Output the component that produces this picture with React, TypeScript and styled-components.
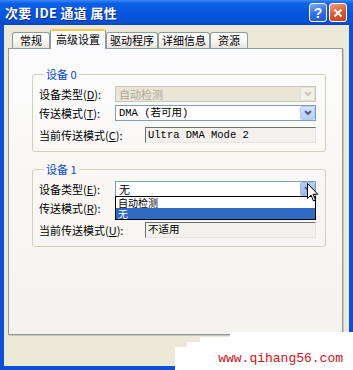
import styled, { createGlobalStyle, css } from 'styled-components'

const GlobalStyle = createGlobalStyle`
  html, body {
    margin: 0;
    padding: 0;
    background: #fff;
  }
  body {
    font-family: "Noto Sans CJK SC", "DejaVu Sans", sans-serif;
  }
`

const TABS = ['常规', '高级设置', '驱动程序', '详细信息', '资源']
const ACTIVE_TAB = 1

const Window = styled.div`
  position: relative;
  width: 353px;
  height: 370px;
  display: flex;
  flex-direction: column;
  overflow: hidden;
  font-size: 11px;
  color: #000;
`

const TitleBar = styled.div`
  flex: none;
  height: 25px;
  display: flex;
  align-items: center;
  padding: 0 6px 0 5px;
  background: linear-gradient(
    180deg,
    #3b86f5 0%,
    #0b60e8 14%,
    #0757dd 50%,
    #0652d6 86%,
    #0a46bd 100%
  );
`

const Title = styled.div`
  flex: 1;
  color: #fff;
  font-weight: bold;
  font-size: 13px;
  letter-spacing: 0.3px;
  text-shadow: 1px 1px 0 #0b2b8c;
  white-space: pre;
`

const CaptionButton = styled.div<{ $kind: 'help' | 'close' }>`
  box-sizing: border-box;
  width: 18px;
  height: 19px;
  margin-left: 2px;
  border: 1px solid #fff;
  border-radius: 3px;
  display: flex;
  align-items: center;
  justify-content: center;
  color: #fff;
  font-family: "Liberation Sans", sans-serif;
  font-weight: bold;
  font-size: 14px;
  ${(p) =>
    p.$kind === 'help'
      ? css`
          background: linear-gradient(160deg, #7eaaf8 0%, #2f6ce6 55%, #2459d4 100%);
        `
      : css`
          background: linear-gradient(160deg, #f0a07e 0%, #d9562a 55%, #c7441b 100%);
        `}
`

const Frame = styled.div`
  flex: 1;
  display: flex;
  flex-direction: column;
  background: #ece9d8;
  border: 4px solid #0d4fd6;
  border-top: none;
  padding: 4px 6px 0 4px;
`

const TabStrip = styled.div`
  display: flex;
  align-items: flex-end;
  height: 19px;
  padding-left: 4px;
`

const Tab = styled.div<{ $active?: boolean }>`
  box-sizing: border-box;
  min-width: 38px;
  height: 16px;
  padding: 0 3px;
  display: flex;
  align-items: center;
  justify-content: center;
  border: 1px solid #919b9c;
  border-bottom: none;
  border-radius: 3px 3px 0 0;
  background: linear-gradient(180deg, #ffffff 0%, #f6f5f1 60%, #e6e4da 100%);
  line-height: 1;
  white-space: nowrap;
  ${(p) =>
    p.$active &&
    css`
      position: relative;
      z-index: 1;
      height: 20px;
      margin-bottom: -1px;
      padding: 0 5px 2px;
      background: #fcfcfe;
      border-top: 2px solid #f9c64a;
    `}
`

const Panel = styled.div`
  box-sizing: border-box;
  flex: none;
  height: 287px;
  border: 1px solid #919b9c;
  box-shadow: 1px 1px 0 #c9c7bb;
  background: linear-gradient(180deg, #fcfcfe 0%, #f9f8f5 40%, #f4f3ee 100%);
  padding: 19px 16px 0 23px;
`

const Group = styled.fieldset`
  margin: 0;
  padding: 5px 9px 8px 6px;
  border: 1px solid #d0d0bf;
  border-radius: 3px;
  min-inline-size: 0;
  & + & {
    margin-top: 11px;
  }
`

const Legend = styled.legend`
  margin-left: 5px;
  padding: 0 2px;
  color: #0046d5;
  font-size: 11px;
  line-height: 13px;
`

const Row = styled.div<{ $label: number; $top: number }>`
  display: grid;
  grid-template-columns: ${(p) => p.$label}px 1fr;
  align-items: center;
  height: 16px;
  margin-top: ${(p) => p.$top}px;
`

const Label = styled.span`
  white-space: nowrap;
  line-height: 1;
`

const Combo = styled.div<{ $disabled?: boolean; $open?: boolean }>`
  position: relative;
  box-sizing: border-box;
  height: 16px;
  display: flex;
  align-items: center;
  padding-left: 3px;
  border: 1px solid ${(p) => (p.$disabled ? '#c9c7ba' : '#7f9db9')};
  background: ${(p) => (p.$disabled ? '#ebe5d6' : '#fff')};
  color: ${(p) => (p.$disabled ? '#aca899' : '#000')};
  ${(p) =>
    p.$open &&
    css`
      border-bottom-color: #000;
    `}
`

const ComboText = styled.span<{ $cjk?: boolean }>`
  flex: 1;
  white-space: nowrap;
  line-height: 1;
  font-family: ${(p) =>
    p.$cjk ? '"Noto Sans CJK SC", sans-serif' : '"Liberation Mono", "Noto Sans CJK SC", monospace'};
  font-size: ${(p) => (p.$cjk ? 11 : 10.5)}px;
`

const DropButton = styled.span<{ $state: 'normal' | 'disabled' | 'hot' }>`
  flex: none;
  box-sizing: border-box;
  width: 15px;
  height: 14px;
  border-radius: 2px;
  display: flex;
  align-items: center;
  justify-content: center;
  ${(p) =>
    p.$state === 'disabled'
      ? css`
          border: 1px solid #e2e0d4;
          background: #f3f1e8;
          color: #c9c7ba;
        `
      : p.$state === 'hot'
        ? css`
            border: 1px solid #a5b9e3;
            background: linear-gradient(180deg, #b9cdf5 0%, #9db5ea 100%);
            color: #4d6185;
          `
        : css`
            border: 1px solid #b8cbf3;
            background: linear-gradient(180deg, #d5e2fd 0%, #b8cdf8 100%);
            color: #4d6185;
          `}
`

const ReadBox = styled.div`
  box-sizing: border-box;
  height: 16px;
  display: flex;
  align-items: center;
  padding-left: 2px;
  border-top: 1px solid #6f6f6f;
  border-left: 1px solid #6f6f6f;
  border-right: 1px solid #e6e4dc;
  border-bottom: 1px solid #e6e4dc;
  background: #f2f1ec;
  white-space: nowrap;
  line-height: 1;
  font-family: "Liberation Mono", "Noto Sans CJK SC", monospace;
  font-size: 10.5px;
`

const DropList = styled.div`
  position: absolute;
  z-index: 2;
  top: 100%;
  left: -1px;
  right: -1px;
  border: 1px solid #000;
  background: #fff;
`

const DropItem = styled.div<{ $selected?: boolean }>`
  display: flex;
  align-items: center;
  height: 11px;
  padding-left: 2px;
  font-size: 10px;
  line-height: 1;
  white-space: nowrap;
  ${(p) =>
    p.$selected &&
    css`
      background: #316ac5;
      color: #fff;
    `}
`

const Footer = styled.div`
  flex: 1;
`

const Watermark = styled.div`
  position: absolute;
  right: 0;
  bottom: 0;
  box-sizing: border-box;
  width: 178px;
  height: 38px;
  background: #fff;
  clip-path: polygon(
    55px 0,
    100% 0,
    100% 100%,
    0 100%,
    0 15px,
    12px 15px,
    12px 10px,
    25px 10px,
    25px 5px,
    55px 5px
  );
  display: flex;
  align-items: flex-end;
  justify-content: flex-end;
  padding: 0 10px 5px 0;
  font-family: "Liberation Mono", monospace;
  font-size: 13px;
  line-height: 1;
  color: #cc1414;
`

const Pointer = styled.svg`
  position: absolute;
  z-index: 5;
  left: 307px;
  top: 183px;
`

const Chevron = () => (
  <svg width="8" height="6" viewBox="0 0 8 6">
    <path d="M1 1 L4 4 L7 1" fill="none" stroke="currentColor" strokeWidth="2" />
  </svg>
)

const Mnemonic = ({ text, keyChar }: { text: string; keyChar: string }) => (
  <Label>
    {text}(<u>{keyChar}</u>):
  </Label>
)

const App = () => {
  return (
    <>
      <GlobalStyle />
      <Window>
        <TitleBar>
          <Title>次要 IDE 通道 属性</Title>
          <CaptionButton $kind="help">?</CaptionButton>
          <CaptionButton $kind="close">
            <svg width="10" height="10" viewBox="0 0 10 10">
              <path d="M1.5 1.5 L8.5 8.5 M8.5 1.5 L1.5 8.5" stroke="#fff" strokeWidth="2" />
            </svg>
          </CaptionButton>
        </TitleBar>
        <Frame>
          <TabStrip>
            {TABS.map((t, i) => (
              <Tab key={t} $active={i === ACTIVE_TAB}>
                {t}
              </Tab>
            ))}
          </TabStrip>
          <Panel>
            <Group>
              <Legend>设备 0</Legend>
              <Row $label={76} $top={0}>
                <Mnemonic text="设备类型" keyChar="D" />
                <Combo $disabled>
                  <ComboText $cjk>自动检测</ComboText>
                  <DropButton $state="disabled">
                    <Chevron />
                  </DropButton>
                </Combo>
              </Row>
              <Row $label={76} $top={3}>
                <Mnemonic text="传送模式" keyChar="T" />
                <Combo>
                  <ComboText>DMA (若可用)</ComboText>
                  <DropButton $state="normal">
                    <Chevron />
                  </DropButton>
                </Combo>
              </Row>
              <Row $label={106} $top={6}>
                <Mnemonic text="当前传送模式" keyChar="C" />
                <ReadBox>Ultra DMA Mode 2</ReadBox>
              </Row>
            </Group>
            <Group>
              <Legend>设备 1</Legend>
              <Row $label={76} $top={0}>
                <Mnemonic text="设备类型" keyChar="E" />
                <Combo $open>
                  <ComboText $cjk>无</ComboText>
                  <DropButton $state="hot">
                    <Chevron />
                  </DropButton>
                  <DropList>
                    <DropItem>自动检测</DropItem>
                    <DropItem $selected>无</DropItem>
                  </DropList>
                </Combo>
              </Row>
              <Row $label={76} $top={3}>
                <Mnemonic text="传送模式" keyChar="R" />
                <Combo $disabled>
                  <ComboText />
                  <DropButton $state="disabled">
                    <Chevron />
                  </DropButton>
                </Combo>
              </Row>
              <Row $label={106} $top={6}>
                <Mnemonic text="当前传送模式" keyChar="U" />
                <ReadBox>不适用</ReadBox>
              </Row>
            </Group>
          </Panel>
          <Footer />
        </Frame>
        <Watermark>www.qihang56.com</Watermark>
        <Pointer width="12" height="19" viewBox="0 0 12 19">
          <path
            d="M0.5 0.5 L0.5 15.5 L4 12 L6.5 18 L8.5 17 L6 11.2 L10.8 11.2 Z"
            fill="#fff"
            stroke="#000"
            strokeWidth="1"
            strokeLinejoin="miter"
          />
        </Pointer>
      </Window>
    </>
  )
}

export default App
